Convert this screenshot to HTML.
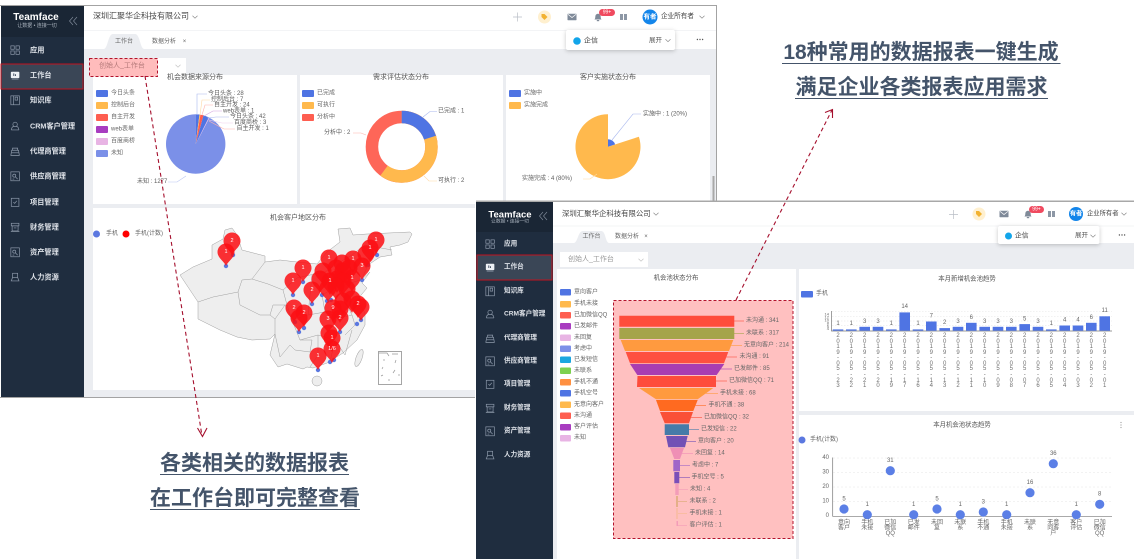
<!DOCTYPE html>
<html lang="zh">
<head>
<meta charset="utf-8">
<title>数据报表</title>
<style>
html,body{margin:0;padding:0;background:#fff;width:1134px;height:559px;overflow:hidden}
#w{position:relative;width:1134px;height:559px;overflow:hidden;filter:blur(.3px)}
svg{position:absolute;left:0;top:0}
text{font-family:"Liberation Sans","Noto Sans CJK SC",sans-serif;dominant-baseline:central;fill:#666;font-size:6px}
.s{fill:#dfe3e9;font-size:7.2px;font-weight:700}
.s2{fill:#dfe3e9;font-size:6.6px;font-weight:700}
.t{fill:#555;font-size:7px}
.t2{fill:#555;font-size:6.4px}
.l{fill:#5c5c5c;font-size:6px}
.h{fill:#44546a;font-size:21px;font-weight:700;text-anchor:middle;font-family:"Liberation Sans","Noto Sans CJK SC",sans-serif}
.m{text-anchor:middle}
.p{fill:#fff;font-size:5.5px;text-anchor:middle}
.d{position:absolute;top:334.2px;width:5px;font:6px/5.55px "Liberation Sans",sans-serif;color:#707070;word-break:break-all;text-align:center}
.ln{fill:none;stroke-width:.6}
</style>
</head>
<body>
<div id="w">
<svg width="1134" height="559" viewBox="0 0 1134 559" xmlns="http://www.w3.org/2000/svg">
<defs>
<g id="i1" transform="translate(1,1) scale(.85)" fill="none" stroke="#8f9bac" stroke-width=".8"><rect x="1" y="1" width="4" height="4"/><rect x="7" y="1" width="4" height="4"/><rect x="1" y="7" width="4" height="4"/><rect x="7" y="7" width="4" height="4"/></g>
<g id="i2" transform="translate(1,1) scale(.85)"><rect x="1" y="2" width="10" height="7.5" rx="1" fill="#eef1f5"/><rect x="4" y="4" width="1" height="3" fill="#26344a"/><rect x="6" y="5" width="1" height="2" fill="#26344a"/><rect x="2" y="10.2" width="8" height="1" fill="#8a95a5"/></g>
<g id="i3" transform="translate(1,1) scale(.85)" fill="none" stroke="#8f9bac" stroke-width=".8"><rect x="1" y="1" width="10" height="10.5"/><line x1="4" y1="1" x2="4" y2="11.5"/><rect x="6" y="2.5" width="3" height="3.500"/></g>
<g id="i4" transform="translate(1,1) scale(.85)" fill="none" stroke="#8f9bac" stroke-width=".8"><circle cx="6" cy="4" r="2.6"/><path d="M1.5 10.5c.5-3 2-4 3-4M10.5 10.5c-.5-3-2-4-3-4M1.5 10.5h9"/></g>
<g id="i5" transform="translate(1,1) scale(.85)" fill="none" stroke="#8f9bac" stroke-width=".8"><path d="M3 5V2.5h6V5M2 5h8l1 6H1z"/><line x1="2" y1="8" x2="10" y2="8"/></g>
<g id="i6" transform="translate(1,1) scale(.85)" fill="none" stroke="#8f9bac" stroke-width=".8"><rect x="1" y="1" width="10" height="10.5"/><circle cx="5" cy="5.5" r="1.8"/><path d="M6.5 7l2.5 2.5M3 9.5h2"/></g>
<g id="i7" transform="translate(1,1) scale(.85)" fill="none" stroke="#8f9bac" stroke-width=".8"><rect x="1.5" y="1.5" width="9" height="9.5"/><path d="M4 6l1.5 1.5L8 4.5"/></g>
<g id="i8" transform="translate(1,1) scale(.85)" fill="none" stroke="#8f9bac" stroke-width=".8"><rect x="1.5" y="1.5" width="9" height="3"/><rect x="2.5" y="4.5" width="7" height="6"/><path d="M4.5 7h3M1 11h10"/></g>
<g id="i9" transform="translate(1,1) scale(.85)" fill="none" stroke="#8f9bac" stroke-width=".8"><rect x="3" y="1.5" width="6" height="5"/><path d="M1 10.5h10M3 6.5L1.5 10.5M9 6.5l1.5 4"/></g>
<path id="pin" d="M0 0C-2-5-8.500-8-8.500-14A8.500 8.500 0 1 1 8.500-14C8.500-8 2-5 0 0Z" fill="#fb0f14" fill-opacity=".86"/>
<g id="tag"><circle r="6.500" fill="#fff0cf"/><path d="M-3-3h3l3 3-3 3-3-3z" fill="#f2b230"/></g>
<g id="mail"><rect x="-4.500" y="-3.200" width="9" height="6.400" rx=".6" fill="#7f8a99"/><path d="M-4-2.600L0 .5 4-2.600" fill="none" stroke="#fff" stroke-width=".7"/></g>
<g id="bell"><path d="M-3.500 2.500c1-1 .6-2.500 1-4 .3-1.200 1.500-1.800 2.500-1.800s2.200.6 2.500 1.800c.4 1.500 0 3 1 4z" fill="#7f8a99"/><rect x="-1.200" y="3" width="2.400" height="1.200" fill="#7f8a99"/></g>
<g id="bk" fill="#8d97a5"><rect x="-3.500" y="-3" width="3" height="6"/><rect x=".5" y="-3" width="3" height="6"/></g>
<path id="chev" d="M-2.500-1.200L0 1.200 2.500-1.200" fill="none" stroke="#888" stroke-width=".7"/>
<g id="dots" fill="#555"><circle cx="-2.600" r=".7"/><circle r=".7"/><circle cx="2.600" r=".7"/></g>
</defs>

<!-- SCREEN 1 -->
<rect x="0" y="5" width="717" height="393" fill="#fff"/>
<rect x="84" y="49" width="632" height="348" fill="#ebedf1"/>
<rect x="84" y="30" width="632" height="1" fill="#f3f4f6"/>
<rect x="1" y="6" width="83" height="391" fill="#1f2d3f"/>
<rect x="1" y="6" width="83" height="31" fill="#1a2635"/>
<path d="M0 5.500H716.500V397.500H0" fill="none" stroke="#a3a3a3" stroke-width="1"/>
<text x="36" y="17.500" class="m" style="fill:#fff;font-size:10px;font-weight:700">Teamface</text>
<text x="37" y="26" class="m" style="fill:#a9b2bd;font-size:5px">让数据 • 连接一切</text>
<path d="M73 17l-3.500 4 3.500 4M77 17l-3.500 4 3.500 4" fill="none" stroke="#7d8897" stroke-width=".7"/>
<rect x="1" y="64" width="82" height="25" fill="#3a4656" stroke="#c1121f" stroke-width="1"/>
<use href="#i1" x="9" y="44"/><text class="s" x="30" y="50">应用</text>
<use href="#i2" x="9" y="69"/><text class="s" x="30" y="75">工作台</text>
<use href="#i3" x="9" y="94"/><text class="s" x="30" y="100">知识库</text>
<use href="#i4" x="9" y="120"/><text class="s" x="30" y="126">CRM客户管理</text>
<use href="#i5" x="9" y="145"/><text class="s" x="30" y="151">代理商管理</text>
<use href="#i6" x="9" y="170"/><text class="s" x="30" y="176">供应商管理</text>
<use href="#i7" x="9" y="196"/><text class="s" x="30" y="202">项目管理</text>
<use href="#i8" x="9" y="221"/><text class="s" x="30" y="227">财务管理</text>
<use href="#i6" x="9" y="246"/><text class="s" x="30" y="252">资产管理</text>
<use href="#i9" x="9" y="271"/><text class="s" x="30" y="277">人力资源</text>
<text x="93" y="16" style="font-size:8px;fill:#444">深圳汇聚华企科技有限公司</text>
<use href="#chev" x="195" y="17"/>
<path d="M513 17h9M517.500 12.500v9" stroke="#b9bec6" stroke-width=".7"/>
<use href="#tag" x="544.500" y="17"/>
<use href="#mail" x="572" y="17"/>
<use href="#bell" x="598" y="17"/>
<rect x="599" y="9" width="16" height="7" rx="3.500" fill="#f04a5f"/>
<text x="607" y="12.500" class="m" style="fill:#fff;font-size:5px">99+</text>
<use href="#bk" x="623.500" y="17"/>
<circle cx="650" cy="17" r="7.500" fill="#1385ea"/>
<text x="650" y="17" class="m" style="fill:#fff;font-size:6.500px;font-weight:700">有者</text>
<text x="661" y="16.500" style="font-size:6.600px;fill:#444">企业所有者</text>
<use href="#chev" x="702" y="17"/>
<path d="M104 49c4-1 4-15 9-15h22c5 0 5 14 9 15z" fill="#ebedf1"/>
<text x="124" y="42" class="m">工作台</text>
<text x="164" y="42" class="m">数据分析</text>
<text x="184.500" y="42" class="m">×</text>
<rect x="566" y="30" width="109" height="20" rx="2" fill="#fff" style="filter:drop-shadow(0 1px 2px rgba(0,0,0,.22))"/>
<circle cx="577" cy="41" r="3.800" fill="#12a5ea"/>
<text x="584" y="41" style="font-size:7px;fill:#444">企信</text>
<text x="649" y="40.500" style="font-size:6.500px;fill:#555">展开</text>
<use href="#chev" x="668" y="40.500"/>
<use href="#dots" x="700" y="39.500"/>
<rect x="93" y="75" width="204" height="129" fill="#fff"/>
<rect x="300" y="75" width="203" height="129" fill="#fff"/>
<rect x="506" y="75" width="204" height="129" fill="#fff"/>
<rect x="93" y="208" width="617" height="182" fill="#fff"/>
<rect x="712.500" y="176" width="2" height="27" fill="#a9a9a9"/>
<rect x="157" y="58" width="29" height="17" fill="#fff"/>
<use href="#chev" x="178" y="66" opacity=".5"/>

<text x="195" y="77.500" class="t m">机会数据来源分布</text>
<g>
<rect x="96" y="90" width="12" height="7" rx="1" fill="#4f74e3"/><text x="111" y="93.500">今日头条</text>
<rect x="96" y="102" width="12" height="7" rx="1" fill="#ffb94d"/><text x="111" y="105.500">控制后台</text>
<rect x="96" y="114" width="12" height="7" rx="1" fill="#fe5e50"/><text x="111" y="117.500">自主开发</text>
<rect x="96" y="126" width="12" height="7" rx="1" fill="#a83cc0"/><text x="111" y="129.500">web表单</text>
<rect x="96" y="138" width="12" height="7" rx="1" fill="#e8b4e4"/><text x="111" y="141.500">百度商桥</text>
<rect x="96" y="150" width="12" height="7" rx="1" fill="#7b90e8"/><text x="111" y="153.500">未知</text>
</g>
<path d="M195.700 144L209.500 117.700A29.700 29.700 0 1 1 195.700 114.300Z" fill="#7b90e8"/>
<path d="M195.700 144L195.700 114.300L199.500 114.500Z" fill="#4f74e3"/>
<path d="M195.700 144L199.500 114.500L200.400 114.700Z" fill="#ffb94d"/>
<path d="M195.700 144L200.400 114.700L203.500 115.300Z" fill="#fe5e50"/>
<path d="M195.700 144L203.500 115.300L208.900 117.400Z" fill="#4f74e3"/>
<path d="M195.700 144L208.900 117.400L209.500 117.700Z" fill="#e8b4e4"/>
<g class="ln">
<path d="M197 115V94h10" stroke="#a9b8ee"/>
<path d="M200 115l2-15h8" stroke="#ffd9a5"/>
<path d="M202 115l3-10h8" stroke="#ffb5ae"/>
<path d="M204 116l9-5h9" stroke="#d6a5e0"/>
<path d="M207 118l9-1h13" stroke="#a9b8ee"/>
<path d="M209 120l13 3h11" stroke="#f0d0ee"/>
<path d="M209 121l15 8h11" stroke="#ffb5ae"/>
<path d="M186 176l-9 6h-9" stroke="#bcc7f3"/>
</g>
<text class="l" x="208" y="94">今日头条 : 28</text>
<text class="l" x="211" y="99.800">控制后台 : 7</text>
<text class="l" x="214" y="105.500">自主开发 : 24</text>
<text class="l" x="223" y="111.300">web表单 : 1</text>
<text class="l" x="230" y="117">今日头条 : 42</text>
<text class="l" x="234" y="123">百度商桥 : 3</text>
<text class="l" x="236.500" y="129">自主开发 : 1</text>
<text class="l" x="137" y="182">未知 : 1277</text>

<text x="401" y="77.500" class="t m">需求评估状态分布</text>
<rect x="302" y="90" width="12" height="7" rx="1" fill="#4f74e3"/><text x="317" y="93.500">已完成</text>
<rect x="302" y="102" width="12" height="7" rx="1" fill="#ffb94d"/><text x="317" y="105.500">可执行</text>
<rect x="302" y="114" width="12" height="7" rx="1" fill="#fe5e50"/><text x="317" y="117.500">分析中</text>
<g fill="none" stroke-width="12.500" transform="rotate(-90 401.700 146.700)">
<circle cx="401.700" cy="146.700" r="29.750" stroke="#fe6658"/>
<circle cx="401.700" cy="146.700" r="29.750" stroke="#ffb94d" stroke-dasharray="112.200 74.700"/>
<circle cx="401.700" cy="146.700" r="29.750" stroke="#4f74e3" stroke-dasharray="37.400 149.500"/>
</g>
<g class="ln">
<path d="M423 117l7-5.500h7" stroke="#a9b8ee"/>
<path d="M424 176l5 5h8" stroke="#ffd9a5"/>
<path d="M366 135l-5-2h-8" stroke="#ffb5ae"/>
</g>
<text class="l" x="438" y="111.500">已完成 : 1</text>
<text class="l" x="438" y="181">可执行 : 2</text>
<text class="l" x="324" y="133">分析中 : 2</text>

<text x="608" y="77.500" class="t m">客户实施状态分布</text>
<rect x="509" y="90" width="12" height="7" rx="1" fill="#4f74e3"/><text x="524" y="93.500">实施中</text>
<rect x="509" y="102" width="12" height="7" rx="1" fill="#ffb94d"/><text x="524" y="105.500">实施完成</text>
<path d="M608 146.700L638.900 136.700A32.500 32.500 0 1 1 608 114.200Z" fill="#ffb94d"/>
<path d="M608 146.700L608 139.200A7.500 7.500 0 0 1 615.100 144.400Z" fill="#4f74e3"/>
<g class="ln">
<path d="M612 140l21-26h8" stroke="#a9b8ee"/>
<path d="M597 174l-7 5h-7" stroke="#ffd9a5"/>
</g>
<text class="l" x="643" y="114.500">实施中 : 1 (20%)</text>
<text class="l" x="522" y="179">实施完成 : 4 (80%)</text>

<!-- Map -->
<text x="298" y="218" class="t m">机会客户地区分布</text>
<circle cx="96.500" cy="234" r="3.500" fill="#5b78e0"/><text x="106" y="234">手机</text>
<circle cx="126" cy="234" r="3.500" fill="#f00"/><text x="135" y="234">手机(计数)</text>
<path d="M180 275L193 267L212 259L212 245L223 239L225 230L232 228L237 235L242 250L265 256L265 262L280 260L297 262L317 264L327 252L340 242L338 229L350 228L353 235L367 234L410 232L412 234L408 242L400 245L390 247L392 255L380 257L368 265L362 279L370 272L362 283L367 288L357 300L365 313L365 325L357 340L343 353L327 363L313 368L307 367L303 369L287 364L278 367L270 355L275 334L270 339L252 340L237 337L220 330L198 319L198 302L190 290Z" fill="#eeeeee" stroke="#a0a0a0" stroke-width=".5"/>
<g class="ln" stroke="#a0a0a0" style="stroke-width:.5">
<path d="M198 302L213 297L238 292L242 280L252 279L265 262"/>
<path d="M252 279L268 284L283 290L287 305L273 305L270 315L260 315L240 305L238 292"/>
<path d="M270 315L275 319L275 334"/>
<path d="M275 319L285 305L292 320L300 340L312 340L310 352L295 350L290 345L280 357L275 334"/>
<path d="M283 290L297 278L310 275L325 272L340 262L352 255L365 245L392 250"/>
<path d="M312 275L310 295L308 315L325 312L340 318L352 315"/>
<path d="M300 340L318 335L335 340L345 355"/>
<path d="M318 335L318 355L310 367"/>
<path d="M335 340L330 362"/>
<path d="M325 312L322 295L340 285L345 300L352 315L355 325L345 335"/>
<path d="M345 285L360 280"/>
<path d="M340 262L345 280"/>
<path d="M345 355L352 330"/>
<path d="M287 305L292 320L308 315"/>
</g>
<ellipse cx="317" cy="381" rx="5" ry="5" fill="#eee" stroke="#a0a0a0" stroke-width=".5"/>
<ellipse cx="359" cy="358" rx="3" ry="9" transform="rotate(20 359 358)" fill="#eee" stroke="#a0a0a0" stroke-width=".5"/>
<rect x="378.500" y="351.500" width="23" height="33" fill="#fff" stroke="#8f8f8f" stroke-width=".8"/>
<path d="M379 353l8 0 2 3M392 354l6 0M384 359v2M396 360l-1 3M383 367l-1 2M395 370l-2 3M388 380h2M399 374v2M381 376l2-1" stroke="#999" stroke-width=".7" fill="none"/>
<g fill="#5b78e0">
<circle cx="226" cy="266" r="2.200"/><circle cx="233" cy="255" r="2.200"/><circle cx="293" cy="295" r="2.200"/><circle cx="303" cy="282" r="2.200"/><circle cx="312" cy="304" r="2.200"/><circle cx="295" cy="322" r="2.200"/><circle cx="299" cy="332" r="2.200"/><circle cx="304" cy="328" r="2.200"/><circle cx="318" cy="370" r="2.200"/><circle cx="330" cy="362" r="2.200"/><circle cx="334" cy="360" r="2.200"/><circle cx="340" cy="332" r="2.200"/><circle cx="357" cy="324" r="2.200"/><circle cx="361" cy="320" r="2.200"/><circle cx="377" cy="255" r="2.200"/><circle cx="368" cy="265" r="2.200"/><circle cx="362" cy="280" r="2.200"/><circle cx="327" cy="301" r="2.200"/><circle cx="331" cy="300" r="2.200"/><circle cx="322" cy="295" r="2.200"/>
</g>
<use href="#pin" x="232" y="255"/><use href="#pin" x="226" y="266"/>
<use href="#pin" x="303" y="282"/><use href="#pin" x="293" y="295"/><use href="#pin" x="312" y="304"/>
<use href="#pin" x="294" y="322"/><use href="#pin" x="304" y="327"/><use href="#pin" x="299" y="332"/>
<use href="#pin" x="376" y="254"/><use href="#pin" x="370" y="262"/><use href="#pin" x="366" y="268"/><use href="#pin" x="362" y="280"/>
<use href="#pin" x="329" y="272"/><use href="#pin" x="342" y="277"/><use href="#pin" x="353" y="273"/><use href="#pin" x="323" y="285"/><use href="#pin" x="336" y="282"/><use href="#pin" x="343" y="285"/><use href="#pin" x="349" y="282"/><use href="#pin" x="320" y="293"/><use href="#pin" x="330" y="295"/><use href="#pin" x="337" y="293"/><use href="#pin" x="352" y="292"/><use href="#pin" x="343" y="295"/><use href="#pin" x="328" y="302"/><use href="#pin" x="336" y="300"/><use href="#pin" x="347" y="303"/><use href="#pin" x="343" y="315"/><use href="#pin" x="352" y="313"/><use href="#pin" x="358" y="318"/><use href="#pin" x="361" y="321"/>
<use href="#pin" x="333" y="322"/><use href="#pin" x="340" y="323"/><use href="#pin" x="340" y="332"/><use href="#pin" x="328" y="333"/><use href="#pin" x="329" y="347"/><use href="#pin" x="332" y="352"/><use href="#pin" x="332" y="363"/><use href="#pin" x="318" y="370"/>
<text class="p" x="226" y="252">1</text><text class="p" x="232" y="241">2</text><text class="p" x="303" y="268">1</text><text class="p" x="293" y="281">1</text><text class="p" x="312" y="290">2</text><text class="p" x="294" y="308">2</text><text class="p" x="304" y="313">2</text><text class="p" x="376" y="240">1</text><text class="p" x="370" y="248">1</text><text class="p" x="362" y="266">3</text><text class="p" x="329" y="258">1</text><text class="p" x="353" y="259">1</text><text class="p" x="330" y="281">1</text><text class="p" x="352" y="278">1</text><text class="p" x="358" y="304">2</text><text class="p" x="333" y="308">9</text><text class="p" x="340" y="318">2</text><text class="p" x="328" y="319">3</text><text class="p" x="332" y="338">1</text><text class="p" x="332" y="349">1/6</text><text class="p" x="318" y="356">1</text>

<!-- Highlight on screen 1 -->
<rect x="89.500" y="58.500" width="68" height="18" fill="#ffbcbc" stroke="#b3122b" stroke-width="1" stroke-dasharray="3 2"/>
<text x="99" y="66" style="font-size:7px;fill:#b47a7a">创始人_工作台</text>

<!-- SCREEN 2 -->
<rect x="475" y="200.500" width="659" height="359" fill="#fff"/>
<rect x="476" y="200.500" width="658" height="1.500" fill="#a8a8a8"/>
<rect x="553" y="243" width="581" height="316" fill="#ebedf1"/>
<rect x="553" y="225.500" width="581" height="1" fill="#f3f4f6"/>
<rect x="476" y="202" width="77" height="357" fill="#1f2d3f"/>
<rect x="476" y="202" width="77" height="30" fill="#1a2635"/>
<text x="510" y="215" class="m" style="fill:#fff;font-size:9.500px;font-weight:700">Teamface</text>
<text x="510" y="221.800" class="m" style="fill:#a9b2bd;font-size:4.800px">让数据 • 连接一切</text>
<path d="M543 212l-3.500 4 3.500 4M547 212l-3.500 4 3.500 4" fill="none" stroke="#7d8897" stroke-width=".7"/>
<rect x="477" y="255" width="75" height="25" fill="#3a4656" stroke="#c1121f" stroke-width="1"/>
<use href="#i1" x="484" y="238"/><text class="s2" x="504" y="244">应用</text>
<use href="#i2" x="484" y="261"/><text class="s2" x="504" y="267">工作台</text>
<use href="#i3" x="484" y="285"/><text class="s2" x="504" y="291">知识库</text>
<use href="#i4" x="484" y="308"/><text class="s2" x="504" y="314">CRM客户管理</text>
<use href="#i5" x="484" y="332"/><text class="s2" x="504" y="338">代理商管理</text>
<use href="#i6" x="484" y="355"/><text class="s2" x="504" y="361">供应商管理</text>
<use href="#i7" x="484" y="378"/><text class="s2" x="504" y="384">项目管理</text>
<use href="#i8" x="484" y="402"/><text class="s2" x="504" y="408">财务管理</text>
<use href="#i6" x="484" y="425"/><text class="s2" x="504" y="431">资产管理</text>
<use href="#i9" x="484" y="449"/><text class="s2" x="504" y="455">人力资源</text>
<text x="562" y="213.500" style="font-size:7.400px;fill:#444">深圳汇聚华企科技有限公司</text>
<use href="#chev" x="656" y="214"/>
<path d="M949 214.500h9M953.500 210v9" stroke="#b9bec6" stroke-width=".7"/>
<use href="#tag" x="979" y="214"/>
<use href="#mail" x="1004" y="214"/>
<use href="#bell" x="1028" y="214"/>
<rect x="1029" y="206" width="15" height="7" rx="3.500" fill="#f04a5f"/>
<text x="1036.500" y="209.500" class="m" style="fill:#fff;font-size:5px">99+</text>
<use href="#bk" x="1051.500" y="214"/>
<circle cx="1076" cy="214" r="7" fill="#1385ea"/>
<text x="1076" y="214" class="m" style="fill:#fff;font-size:6.200px;font-weight:700">有者</text>
<text x="1087" y="213.500" style="font-size:6.300px;fill:#444">企业所有者</text>
<use href="#chev" x="1124" y="214"/>
<path d="M574 243c4-1 4-12 9-12h18c5 0 4 11 8 12z" fill="#ebedf1"/>
<text x="591.500" y="237" class="m">工作台</text>
<text x="627" y="237" class="m">数据分析</text>
<text x="646" y="237" class="m">×</text>
<rect x="998" y="226" width="101.500" height="18" rx="2" fill="#fff" style="filter:drop-shadow(0 1px 2px rgba(0,0,0,.22))"/>
<circle cx="1008.500" cy="236" r="3.500" fill="#12a5ea"/>
<text x="1015" y="236" style="font-size:6.800px;fill:#444">企信</text>
<text x="1075" y="235.500" style="font-size:6.500px;fill:#555">展开</text>
<use href="#chev" x="1093" y="236"/>
<use href="#dots" x="1122" y="235"/>
<rect x="560" y="252" width="88" height="15" fill="#fff"/>
<text x="568" y="259.500" style="font-size:7px;fill:#999">创始人_工作台</text>
<use href="#chev" x="641" y="260" opacity=".5"/>
<rect x="557" y="269" width="239" height="290" fill="#fff"/>
<rect x="799" y="269" width="335" height="142" fill="#fff"/>
<rect x="799" y="415" width="335" height="144" fill="#fff"/>

<text x="676" y="278" class="t2 m">机会池状态分布</text>
<g>
<rect x="560" y="289" width="11" height="6.500" rx="1" fill="#4f74e3"/><text x="574" y="292.500">意向客户</text>
<rect x="560" y="301" width="11" height="6.500" rx="1" fill="#ffb94d"/><text x="574" y="304">手机未接</text>
<rect x="560" y="312" width="11" height="6.500" rx="1" fill="#fe5e50"/><text x="574" y="315.300">已加微信QQ</text>
<rect x="560" y="323" width="11" height="6.500" rx="1" fill="#a83cc0"/><text x="574" y="326.500">已发邮件</text>
<rect x="560" y="334.500" width="11" height="6.500" rx="1" fill="#e8b4e4"/><text x="574" y="338">未回复</text>
<rect x="560" y="345.500" width="11" height="6.500" rx="1" fill="#7b90e8"/><text x="574" y="349">考虑中</text>
<rect x="560" y="356.500" width="11" height="6.500" rx="1" fill="#1ba7e0"/><text x="574" y="360">已发短信</text>
<rect x="560" y="367.500" width="11" height="6.500" rx="1" fill="#7dd150"/><text x="574" y="371">未联系</text>
<rect x="560" y="379" width="11" height="6.500" rx="1" fill="#ff9040"/><text x="574" y="382.300">手机不通</text>
<rect x="560" y="390" width="11" height="6.500" rx="1" fill="#4f74e3"/><text x="574" y="393.500">手机空号</text>
<rect x="560" y="401.500" width="11" height="6.500" rx="1" fill="#ffb94d"/><text x="574" y="405">无意向客户</text>
<rect x="560" y="412.500" width="11" height="6.500" rx="1" fill="#fe5e50"/><text x="574" y="416">未沟通</text>
<rect x="560" y="424" width="11" height="6.500" rx="1" fill="#a83cc0"/><text x="574" y="427">客户评估</text>
<rect x="560" y="435" width="11" height="6.500" rx="1" fill="#e8b4e4"/><text x="574" y="438">未知</text>
</g>

<!-- Funnel highlight -->
<rect x="613.500" y="300.500" width="179.500" height="238" fill="#ffc0c0" stroke="#b3122b" stroke-width="1" stroke-dasharray="3 2"/>
<path d="M619.300 315.700H734.300V326.700H619.300Z" fill="#fe4c3b"/>
<path d="M619.300 328H734.300V339H619.300Z" fill="#a5a44a"/>
<path d="M620.700 340H733.300L729 351H625Z" fill="#ff9a3f"/>
<path d="M625.700 352H728.300L724 363.300H630Z" fill="#fe5040"/>
<path d="M630 364H724.300L716.700 375H637.300Z" fill="#a93db2"/>
<path d="M637.500 376H716L716 387H637Z" fill="#fe4c3b"/>
<path d="M639 388H713.300L697.700 399.300H656Z" fill="#ff9a3f"/>
<path d="M656 400H697.700L693.300 411H660Z" fill="#ff6a20"/>
<path d="M660 412H693L689 423.300H664.700Z" fill="#fa5037"/>
<path d="M664.700 424.300H689V435H664.700Z" fill="#467ba8"/>
<path d="M666 436H687.700L685 447.300H668.300Z" fill="#7251b5"/>
<path d="M670 448H684L680 459H674.300Z" fill="#ef8fb5"/>
<path d="M673.300 460H680V471.300H673.300Z" fill="#a066c8"/>
<path d="M674.300 472H679.300V483.300H674.300Z" fill="#7a4eb8"/>
<path d="M675.300 484H678.700V495H675.300Z" fill="#f39cb8"/>
<path d="M676.300 496H677.700V507H676.300Z" fill="#d9a870"/>
<path d="M676.500 508H677.500V519H676.500Z" fill="#f5b98f"/>
<path d="M676.500 521H678V526H676.500Z" fill="#f39cb8"/>
<g stroke-width=".6">
<path d="M734 321h10" stroke="#fe4c3b"/><path d="M734 333.300h10" stroke="#a5a44a"/><path d="M731 345.300h11" stroke="#ff9a3f"/><path d="M726 357h11" stroke="#fe5040"/><path d="M720 369h12" stroke="#a93db2"/><path d="M716 381h11" stroke="#fe4c3b"/><path d="M705 393.300h13" stroke="#ff9a3f"/><path d="M695 405.300h11" stroke="#ff6a20"/><path d="M691 417.300h11" stroke="#fa5037"/><path d="M689 429.300h10" stroke="#467ba8"/><path d="M686 441.700h10" stroke="#7251b5"/><path d="M682 453.700h11" stroke="#ef8fb5"/><path d="M680 465.300h10" stroke="#a066c8"/><path d="M679 477.300h11" stroke="#7a4eb8"/><path d="M678 489.300h10" stroke="#f39cb8"/><path d="M678 501.300h9" stroke="#d9a870"/><path d="M678 513.700h9" stroke="#f5b98f"/><path d="M678 525.700h9" stroke="#f39cb8"/>
</g>
<g>
<text x="746" y="321">未沟通 : 341</text>
<text x="746" y="333.300">未联系 : 317</text>
<text x="744" y="345.300">无意向客户 : 214</text>
<text x="739.500" y="357">未沟通 : 91</text>
<text x="734" y="369">已发邮件 : 85</text>
<text x="729" y="381">已加微信QQ : 71</text>
<text x="720" y="393.300">手机未接 : 68</text>
<text x="708.500" y="405.300">手机不通 : 38</text>
<text x="704" y="417.300">已加微信QQ : 32</text>
<text x="701" y="429.300">已发短信 : 22</text>
<text x="698" y="441.700">意向客户 : 20</text>
<text x="695" y="453.700">未回复 : 14</text>
<text x="692" y="465.300">考虑中 : 7</text>
<text x="691.500" y="477.300">手机空号 : 5</text>
<text x="690" y="489.300">未知 : 4</text>
<text x="689.500" y="501.300">未联系 : 2</text>
<text x="689.500" y="513.700">手机未接 : 1</text>
<text x="689.500" y="525.700">客户评估 : 1</text>
</g>

<!-- Bar chart -->
<text x="967" y="279" class="t2 m">本月新增机会池趋势</text>
<rect x="801" y="291" width="12" height="6.500" rx="1" fill="#4f74e3"/>
<text x="816" y="294">手机</text>
<g stroke="#e4e4e4" stroke-width=".5" stroke-dasharray="1.500 1.500">
<path d="M832 311.500H1112M832 316.500H1112M832 321H1112M832 325.700H1112"/>
</g>
<path d="M831.500 311V331H1112" fill="none" stroke="#777" stroke-width=".7"/>
<g style="font-size:4px"><text x="829" y="314" text-anchor="end" style="font-size:4px">14</text><text x="829" y="317" text-anchor="end" style="font-size:4px">12</text><text x="829" y="320" text-anchor="end" style="font-size:4px">10</text><text x="829" y="323" text-anchor="end" style="font-size:4px">8</text><text x="829" y="326" text-anchor="end" style="font-size:4px">6</text><text x="829" y="328.500" text-anchor="end" style="font-size:4px">4</text></g>
<g fill="#4f74e3">
<rect x="832.700" y="329.400" width="10.600" height="1.300"/>
<rect x="846" y="329.400" width="10.600" height="1.300"/>
<rect x="859.400" y="326.800" width="10.600" height="3.900"/>
<rect x="872.700" y="326.800" width="10.600" height="3.900"/>
<rect x="886" y="329.400" width="10.600" height="1.300"/>
<rect x="899.400" y="312.400" width="10.600" height="18.300"/>
<rect x="912.700" y="329.400" width="10.600" height="1.300"/>
<rect x="926" y="321.500" width="10.600" height="9.200"/>
<rect x="939.400" y="328.100" width="10.600" height="2.600"/>
<rect x="952.700" y="326.800" width="10.600" height="3.900"/>
<rect x="966" y="322.800" width="10.600" height="7.900"/>
<rect x="979.400" y="326.800" width="10.600" height="3.900"/>
<rect x="992.700" y="326.800" width="10.600" height="3.900"/>
<rect x="1006" y="326.800" width="10.600" height="3.900"/>
<rect x="1019.400" y="324.100" width="10.600" height="6.600"/>
<rect x="1032.700" y="326.800" width="10.600" height="3.900"/>
<rect x="1046" y="329.400" width="10.600" height="1.300"/>
<rect x="1059.400" y="325.500" width="10.600" height="5.200"/>
<rect x="1072.700" y="325.500" width="10.600" height="5.200"/>
<rect x="1086" y="322.800" width="10.600" height="7.900"/>
<rect x="1099.400" y="316.300" width="10.600" height="14.400"/>
</g>
<g text-anchor="middle">
<text x="838" y="324">1</text><text x="851.300" y="324">1</text><text x="864.700" y="322">3</text><text x="878" y="322">3</text><text x="891.300" y="324">1</text><text x="904.700" y="307">14</text><text x="918" y="324">1</text><text x="931.300" y="316.500">7</text><text x="944.700" y="323">2</text><text x="958" y="322">3</text><text x="971.300" y="318">6</text><text x="984.700" y="322">3</text><text x="998" y="322">3</text><text x="1011.300" y="322">3</text><text x="1024.700" y="319.500">5</text><text x="1038" y="322">3</text><text x="1051.300" y="324">1</text><text x="1064.700" y="320.500">4</text><text x="1078" y="320.500">4</text><text x="1091.300" y="318">6</text><text x="1104.700" y="311">11</text>
</g>

<!-- Scatter chart -->
<text x="962" y="425" class="t2 m">本月机会池状态趋势</text>
<g fill="#999"><circle cx="1121" cy="422.500" r=".6"/><circle cx="1121" cy="425" r=".6"/><circle cx="1121" cy="427.500" r=".6"/></g>
<circle cx="802" cy="440" r="3.500" fill="#5b78e0"/>
<text x="810" y="440">手机(计数)</text>
<g stroke="#e6e6e6" stroke-width=".5" stroke-dasharray="2 2"><path d="M833 458H1112M833 472.500H1112M833 487H1112M833 501.500H1112"/></g>
<path d="M832.700 457.500V516.300H1112" fill="none" stroke="#777" stroke-width=".7"/>
<g text-anchor="end">
<text x="829" y="458">40</text><text x="829" y="472.500">30</text><text x="829" y="487">20</text><text x="829" y="501.500">10</text><text x="829" y="516">0</text>
</g>
<g fill="#5b7fe6">
<circle cx="844" cy="509" r="4.600"/><circle cx="867.300" cy="514.700" r="4.600"/><circle cx="890.300" cy="470.700" r="4.600"/><circle cx="913.700" cy="514.700" r="4.600"/><circle cx="937" cy="509" r="4.600"/><circle cx="960.300" cy="514.700" r="4.600"/><circle cx="983.300" cy="512" r="4.600"/><circle cx="1006.700" cy="514.700" r="4.600"/><circle cx="1030" cy="492.700" r="4.600"/><circle cx="1053.300" cy="463.700" r="4.600"/><circle cx="1076.300" cy="514.700" r="4.600"/><circle cx="1099.700" cy="504.300" r="4.600"/>
</g>
<g text-anchor="middle">
<text x="844" y="499.500">5</text><text x="867.300" y="505">1</text><text x="890.300" y="461">31</text><text x="913.700" y="505">1</text><text x="937" y="499.500">5</text><text x="960.300" y="505">1</text><text x="983.300" y="502.500">3</text><text x="1006.700" y="505">1</text><text x="1030" y="483">16</text><text x="1053.300" y="454">36</text><text x="1076.300" y="505">1</text><text x="1099.700" y="494.500">8</text>
<text x="844" y="523">意向</text><text x="844" y="528.500">客户</text>
<text x="867.300" y="523">手机</text><text x="867.300" y="528.500">未接</text>
<text x="890.300" y="523">已加</text><text x="890.300" y="528.500">微信</text><text x="890.300" y="534">QQ</text>
<text x="913.700" y="523">已发</text><text x="913.700" y="528.500">邮件</text>
<text x="937" y="523">未回</text><text x="937" y="528.500">复</text>
<text x="960.300" y="523">未联</text><text x="960.300" y="528.500">系</text>
<text x="983.300" y="523">手机</text><text x="983.300" y="528.500">不通</text>
<text x="1006.700" y="523">手机</text><text x="1006.700" y="528.500">未接</text>
<text x="1030" y="523">未联</text><text x="1030" y="528.500">系</text>
<text x="1053.300" y="523">无意</text><text x="1053.300" y="528.500">向客</text><text x="1053.300" y="534">户</text>
<text x="1076.300" y="523">客户</text><text x="1076.300" y="528.500">评估</text>
<text x="1099.700" y="523">已加</text><text x="1099.700" y="528.500">微信</text><text x="1099.700" y="534">QQ</text>
</g>

<!-- Dashed annotation arrows -->
<path d="M145 76L202 436" fill="none" stroke="#a50f2d" stroke-width="1.100" stroke-dasharray="4 3"/>
<path d="M197.500 428L202.500 436.500L207 428" fill="none" stroke="#a50f2d" stroke-width="1.100"/>
<path d="M736 300L832 110" fill="none" stroke="#a50f2d" stroke-width="1.100" stroke-dasharray="4 3"/>
<path d="M825 112.500L832.500 109.500L832.500 118" fill="none" stroke="#a50f2d" stroke-width="1.100"/>

<!-- Headings -->
<text class="h" x="921" y="52.500">18种常用的数据报表一键生成</text>
<path d="M782 63.500H1060.500" stroke="#44546a" stroke-width="1"/>
<text class="h" x="921.500" y="87.500">满足企业各类报表应用需求</text>
<path d="M795 98.500H1048" stroke="#44546a" stroke-width="1"/>
<text class="h" x="254.500" y="463.500">各类相关的数据报表</text>
<path d="M160 474.500H349" stroke="#44546a" stroke-width="1"/>
<text class="h" x="255" y="498.500">在工作台即可完整查看</text>
<path d="M150 509.500H360" stroke="#44546a" stroke-width="1"/>
</svg>
<div class="d" style="left:835.5px">2019-05-23</div>
<div class="d" style="left:848.8px">2019-05-22</div>
<div class="d" style="left:862.2px">2019-05-21</div>
<div class="d" style="left:875.5px">2019-05-20</div>
<div class="d" style="left:888.8px">2019-05-19</div>
<div class="d" style="left:902.2px">2019-05-17</div>
<div class="d" style="left:915.5px">2019-05-16</div>
<div class="d" style="left:928.8px">2019-05-14</div>
<div class="d" style="left:942.2px">2019-05-13</div>
<div class="d" style="left:955.5px">2019-05-12</div>
<div class="d" style="left:968.8px">2019-05-11</div>
<div class="d" style="left:982.2px">2019-05-10</div>
<div class="d" style="left:995.5px">2019-05-09</div>
<div class="d" style="left:1008.8px">2019-05-08</div>
<div class="d" style="left:1022.2px">2019-05-07</div>
<div class="d" style="left:1035.5px">2019-05-06</div>
<div class="d" style="left:1048.8px">2019-05-05</div>
<div class="d" style="left:1062.2px">2019-05-04</div>
<div class="d" style="left:1075.5px">2019-05-03</div>
<div class="d" style="left:1088.8px">2019-05-02</div>
<div class="d" style="left:1102.2px">2019-05-01</div>
</div>
</body>
</html>
